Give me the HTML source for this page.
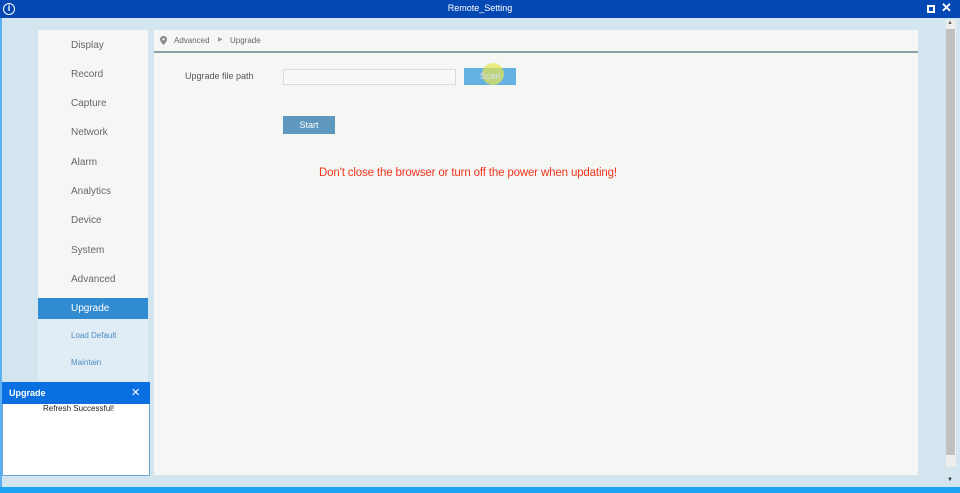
<!DOCTYPE html>
<html><head><style>
*{margin:0;padding:0;box-sizing:border-box}
body{width:960px;height:493px;overflow:hidden;background:#d3e5ef;font-family:"Liberation Sans",sans-serif;position:relative}
.a{position:absolute}
.nav div{position:absolute;left:33px;font-size:10px;color:#666}
</style></head><body>
<div class="a" style="left:0;top:0;width:960px;height:18px;background:#0448b3"></div>
<div class="a" style="left:3px;top:3px;width:12px;height:12px;border:1.5px solid #fff;border-radius:50%;color:#fff;font-size:9px;line-height:9px;text-align:center;font-weight:bold">i</div>
<div class="a" style="left:0;top:3px;width:960px;text-align:center;color:#fff;font-size:9px">Remote_Setting</div>
<div class="a" style="left:927px;top:5px;width:8px;height:8px;border:2px solid #fff"></div>
<div class="a" style="left:941px;top:0px;color:#fff;font-size:13px;font-weight:bold">✕</div>
<div class="a" style="left:0;top:18px;width:2px;height:470px;background:#5ab0f0"></div>
<div class="a" style="left:0;top:487px;width:960px;height:6px;background:#1ea2f2"></div>
<div class="a" style="left:946px;top:20px;width:10px;height:447px;background:#ebeeeb"></div>
<div class="a" style="left:946px;top:29px;width:9px;height:426px;background:#c0c2bf"></div>
<div class="a" style="left:947px;top:20px;font-size:6px;color:#666">▲</div>
<div class="a" style="left:947px;top:477px;font-size:6px;color:#333">▼</div>

<div class="a nav" style="left:38px;top:30px;width:110px;height:268px;background:#f5f7f5">
<div style="top:10px">Display</div><div style="top:39px">Record</div><div style="top:68px">Capture</div><div style="top:97px">Network</div><div style="top:127px">Alarm</div><div style="top:156px">Analytics</div><div style="top:185px">Device</div><div style="top:215px">System</div><div style="top:244px">Advanced</div>
</div>
<div class="a" style="left:38px;top:298px;width:110px;height:21px;background:#318bd0;color:#fff;font-size:10px;padding:5px 0 0 33px">Upgrade</div>
<div class="a" style="left:38px;top:319px;width:110px;height:63px;background:#e1edf5">
<div class="a" style="left:33px;top:12px;font-size:8px;color:#4a8ac6">Load Default</div>
<div class="a" style="left:33px;top:39px;font-size:8px;color:#4a8ac6">Maintain</div></div>

<div class="a" style="left:154px;top:30px;width:764px;height:445px;background:#f5f7f5"></div>
<div class="a" style="left:154px;top:51px;width:764px;height:2px;background:#8a9ea6"></div>
<svg class="a" style="left:160px;top:36px" width="7" height="9" viewBox="0 0 7 9"><path d="M3.5 0C1.5 0 0 1.5 0 3.3 0 5.5 3.5 9 3.5 9S7 5.5 7 3.3C7 1.5 5.5 0 3.5 0z" fill="#888"/><circle cx="3.5" cy="3.3" r="1.2" fill="#f5f7f5"/></svg>
<div class="a" style="left:174px;top:36px;font-size:8px;color:#666">Advanced</div>
<div class="a" style="left:218px;top:36px;font-size:6px;color:#999">▶</div>
<div class="a" style="left:230px;top:36px;font-size:8px;color:#666">Upgrade</div>
<div class="a" style="left:185px;top:71px;font-size:9px;color:#555">Upgrade file path</div>
<div class="a" style="left:283px;top:69px;width:173px;height:16px;border:1px solid #d8dcd8;background:#f7f8f7"></div>
<div class="a" style="left:464px;top:68px;width:52px;height:17px;background:#63b0e2"></div>
<div class="a" style="left:482px;top:63px;width:22px;height:22px;border-radius:50%;background:rgba(230,230,80,.7)"></div>
<div class="a" style="left:464px;top:71px;width:52px;text-align:center;font-size:9px;color:#dde">Scan</div>
<div class="a" style="left:283px;top:116px;width:52px;height:18px;background:#5f98bf;color:#fff;font-size:9px;text-align:center;line-height:18px">Start</div>
<div class="a" style="left:319px;top:167px;font-size:11.5px;letter-spacing:-0.15px;color:#f2341e;white-space:nowrap">Don't close the browser or turn off the power when updating!</div>

<div class="a" style="left:2px;top:382px;width:148px;height:94px;background:#fff;border:1px solid #6aa8d8"></div>
<div class="a" style="left:2px;top:382px;width:148px;height:22px;background:#0a6fe0;color:#fff;font-size:9px;font-weight:bold;padding:6px 0 0 7px">Upgrade</div>
<div class="a" style="left:131px;top:386px;color:#fff;font-size:11px">✕</div>
<div class="a" style="left:43px;top:404px;font-size:8px;color:#222">Refresh Successful!</div>
</body></html>
